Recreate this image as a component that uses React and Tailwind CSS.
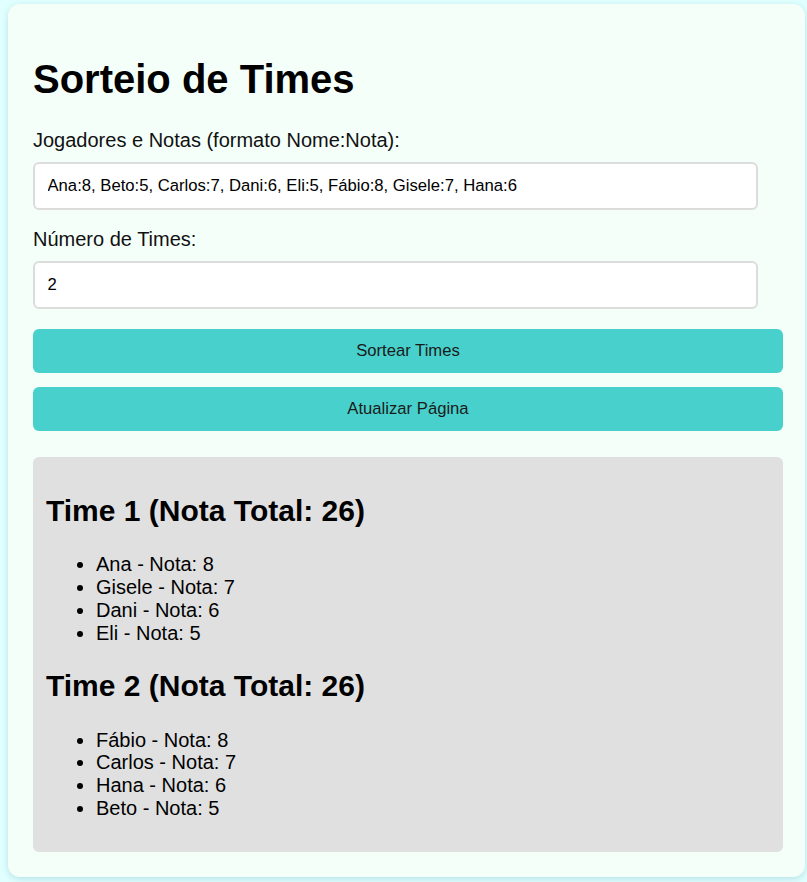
import React from "react";

const team1 = [
  ["Ana", 8],
  ["Gisele", 7],
  ["Dani", 6],
  ["Eli", 5],
];
const team2 = [
  ["Fábio", 8],
  ["Carlos", 7],
  ["Hana", 6],
  ["Beto", 5],
];

function Team({ title, players }) {
  return (
    <>
      <h2 className="mt-[24.9px] mb-[24.9px] text-[30px] leading-[34.5px] font-bold text-black">
        {title}
      </h2>
      <ul className="list-disc pl-[50px] mb-[20px] text-[20px] leading-[22.8px] text-black">
        {players.map(([n, s]) => (
          <li key={n}>
            {n} - Nota: {s}
          </li>
        ))}
      </ul>
    </>
  );
}

export default function App() {
  return (
    <div className="min-h-screen bg-[#e0ffff] pt-[4px] pb-[4px] pl-[8px] font-['Liberation_Sans',Arial,sans-serif] text-black">
      <div className="w-[797px] rounded-[12px] bg-[#f5fffa] pt-[25px] pb-[25px] pl-[25px] pr-[22px] shadow-[0_2px_6px_rgba(0,90,110,0.18)]">
        <h1 className="mt-[26.8px] mb-[26.8px] text-[40px] leading-[46px] font-bold">
          Sorteio de Times
        </h1>
        <label className="block text-[20px] leading-[23px] mb-[10px] text-[#111]">
          Jogadores e Notas (formato Nome:Nota):
        </label>
        <input
          readOnly
          value="Ana:8, Beto:5, Carlos:7, Dani:6, Eli:5, Fábio:8, Gisele:7, Hana:6"
          className="block w-[725px] h-[48px] border-2 border-[#dcdcdc] rounded-[6px] bg-white px-[12.5px] text-[16.67px] text-black outline-none mb-[18.75px]"
        />
        <label className="block text-[20px] leading-[23px] mb-[10px] text-[#111]">
          Número de Times:
        </label>
        <input
          readOnly
          value="2"
          className="block w-[725px] h-[48px] border-2 border-[#dcdcdc] rounded-[6px] bg-white px-[12.5px] text-[16.67px] text-black outline-none mb-[19.5px]"
        />
        <button className="block w-full h-[44px] rounded-[6px] bg-[#48d1cc] text-[16.67px] text-[#1a1a1a] mb-[14px]">
          Sortear Times
        </button>
        <button className="block w-full h-[44px] rounded-[6px] bg-[#48d1cc] text-[16.67px] text-[#1a1a1a] mb-[26px]">
          Atualizar Página
        </button>
        <div className="rounded-[6px] bg-[#e0e0e0] px-[13px] py-[12px]">
          <Team title="Time 1 (Nota Total: 26)" players={team1} />
          <Team title="Time 2 (Nota Total: 26)" players={team2} />
        </div>
      </div>
    </div>
  );
}
